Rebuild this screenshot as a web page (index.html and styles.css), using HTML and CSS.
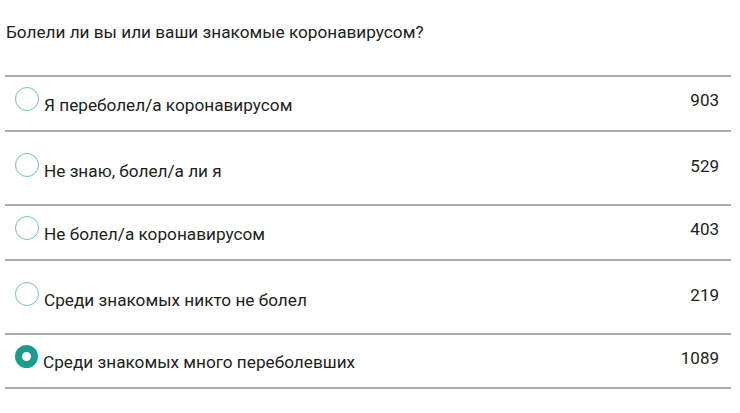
FILE: index.html
```html
<!DOCTYPE html>
<html>
<head>
  <meta charset="UTF-8" />
  <title>Опрос</title>
  <link rel="stylesheet" href="styles.css">
</head>
<body>
  <div class="poll">
    <h2 class="question">Болели ли вы или ваши знакомые коронавирусом?</h2>

    <div class="answers">
      <div class="answer">
        <label class="choice"><span class="radio"></span>Я переболел/а коронавирусом</label>
        <span class="count">903</span>
      </div>
      <div class="answer tall">
        <label class="choice"><span class="radio"></span>Не знаю, болел/а ли я</label>
        <span class="count">529</span>
      </div>
      <div class="answer">
        <label class="choice"><span class="radio"></span>Не болел/а коронавирусом</label>
        <span class="count">403</span>
      </div>
      <div class="answer tall">
        <label class="choice"><span class="radio"></span>Среди знакомых никто не болел</label>
        <span class="count">219</span>
      </div>
      <div class="answer">
        <label class="choice"><span class="radio checked"></span>Среди знакомых много переболевших</label>
        <span class="count">1089</span>
      </div>
    </div>
  </div>
</body>
</html>
```

FILE: styles.css
```css
body {
  margin: 0;
  padding: 0 9px 0 5px;
  background: #fff;
  color: #222;
  font-family: Roboto, "Liberation Sans", sans-serif;
}

.question {
  margin: 22px 0 33px 1px;
  font-size: 17.2px;
  font-weight: normal;
  line-height: 20px;
}

.answer {
  display: flex;
  justify-content: space-between;
  align-items: flex-start;
  padding: 10px 12px 15px 10px;
  border-top: 2px solid #ababab;
}

.answer:last-child {
  border-bottom: 2px solid #ababab;
}

.answer.tall {
  padding-top: 21px;
  padding-bottom: 23px;
}

.choice {
  display: flex;
  align-items: baseline;
  gap: 5px;
  font-size: 17.2px;
  line-height: 20px;
}

.radio {
  display: inline-block;
  width: 22px;
  height: 22px;
  border: 1.5px solid #6cc5bd;
  border-radius: 50%;
}

.radio.checked {
  width: 9px;
  height: 9px;
  border: 7px solid #1c9c8c;
}

.count {
  margin-top: 3px;
  font-size: 17px;
  line-height: 20px;
}
```
